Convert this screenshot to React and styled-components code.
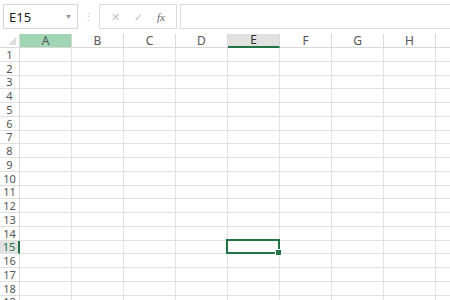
import React from "react";
import styled, { createGlobalStyle } from "styled-components";

const GlobalStyle = createGlobalStyle`
  html, body {
    margin: 0;
    padding: 0;
    background: #ffffff;
  }
  body {
    font-family: "Noto Sans", "Open Sans", sans-serif;
    color: #444;
  }
`;

const Sheet = styled.div`
  width: 450px;
  height: 300px;
  overflow: hidden;
  background: #fff;
`;

const Toolbar = styled.div`
  display: flex;
  align-items: center;
  height: 25px;
  padding: 4px 0 5px 3px;
`;

const NameBox = styled.div`
  box-sizing: border-box;
  width: 75px;
  height: 25px;
  border: 1px solid #d6d6d6;
  display: flex;
  align-items: center;
  justify-content: space-between;
  padding: 0 5px 0 5px;
  font-size: 13px;
  color: #222;
`;

const Caret = styled.span`
  font-size: 7px;
  color: #888;
`;

const Grip = styled.div`
  width: 21px;
  text-align: center;
  color: #c8c8c8;
  font-size: 11px;
`;

const ButtonBox = styled.div`
  box-sizing: border-box;
  width: 78px;
  height: 25px;
  border: 1px solid #dcdcdc;
  display: flex;
  align-items: center;
  justify-content: space-around;
  padding: 0 4px;
  color: #c4c4c4;
  font-size: 11px;
`;

const Fx = styled.span`
  font-family: "Liberation Serif", serif;
  font-style: italic;
  color: #666;
  font-size: 11px;
`;

const FormulaInput = styled.div`
  box-sizing: border-box;
  flex: 1;
  height: 25px;
  margin-left: 3px;
  border: 1px solid #dcdcdc;
  border-right: none;
`;

const Grid = styled.div`
  display: grid;
  grid-template-columns: 20px repeat(9, 52px);
  grid-template-rows: 14px repeat(19, 13.75px);
`;

const Corner = styled.div`
  box-sizing: border-box;
  border-right: 1px solid #d8d8d8;
  border-bottom: 1px solid #d8d8d8;
  position: relative;
  &::after {
    content: "";
    position: absolute;
    right: 3px;
    bottom: 2px;
    border-left: 8px solid transparent;
    border-bottom: 8px solid #dedede;
  }
`;

const ColHeader = styled.div`
  box-sizing: border-box;
  display: flex;
  align-items: center;
  justify-content: center;
  font-size: 12px;
  line-height: 1;
  color: ${(p) => (p.active ? "#333" : "#555")};
  background: ${(p) => (p.highlight ? "#a0d6b4" : p.active ? "#e1e1e1" : "#fff")};
  border-right: 1px solid #d8d8d8;
  border-bottom: ${(p) => (p.active ? "2px solid #217346" : "1px solid #d8d8d8")};
`;

const RowHeader = styled.div`
  box-sizing: border-box;
  display: flex;
  align-items: center;
  justify-content: center;
  font-size: 11px;
  line-height: 11px;
  color: ${(p) => (p.active ? "#217346" : "#555")};
  background: ${(p) => (p.active ? "#e1e1e1" : "#fff")};
  border-right: ${(p) => (p.active ? "2px solid #217346" : "1px solid #d8d8d8")};
  border-bottom: 1px solid #e0e0e0;
`;

const Cell = styled.div`
  box-sizing: border-box;
  position: relative;
  border-right: 1px solid #e2e2e2;
  border-bottom: 1px solid #e2e2e2;
`;

const Selection = styled.div`
  position: absolute;
  left: -2px;
  top: -2px;
  right: -1px;
  bottom: -1px;
  border: 2px solid #217346;
  z-index: 2;
  &::after {
    content: "";
    position: absolute;
    right: -4px;
    bottom: -4px;
    width: 5px;
    height: 5px;
    background: #217346;
    border: 1px solid #fff;
  }
`;

const cols = ["A", "B", "C", "D", "E", "F", "G", "H", "I"];
const rows = Array.from({ length: 19 }, (_, i) => i + 1);

const App = () => {
  return (
    <>
      <GlobalStyle />
      <Sheet>
        <Toolbar>
          <NameBox>
            <span>E15</span>
            <Caret>▼</Caret>
          </NameBox>
          <Grip>⋮</Grip>
          <ButtonBox>
            <span>✕</span>
            <span>✓</span>
            <Fx>fx</Fx>
          </ButtonBox>
          <FormulaInput />
        </Toolbar>
        <Grid>
          <Corner />
          {cols.map((c) => (
            <ColHeader key={c} highlight={c === "A"} active={c === "E"}>
              {c === "I" ? "" : c}
            </ColHeader>
          ))}
          {rows.map((r) => (
            <React.Fragment key={r}>
              <RowHeader active={r === 15}>{r}</RowHeader>
              {cols.map((c) => (
                <Cell key={c + r}>
                  {r === 15 && c === "E" && <Selection />}
                </Cell>
              ))}
            </React.Fragment>
          ))}
        </Grid>
      </Sheet>
    </>
  );
};

export default App;
